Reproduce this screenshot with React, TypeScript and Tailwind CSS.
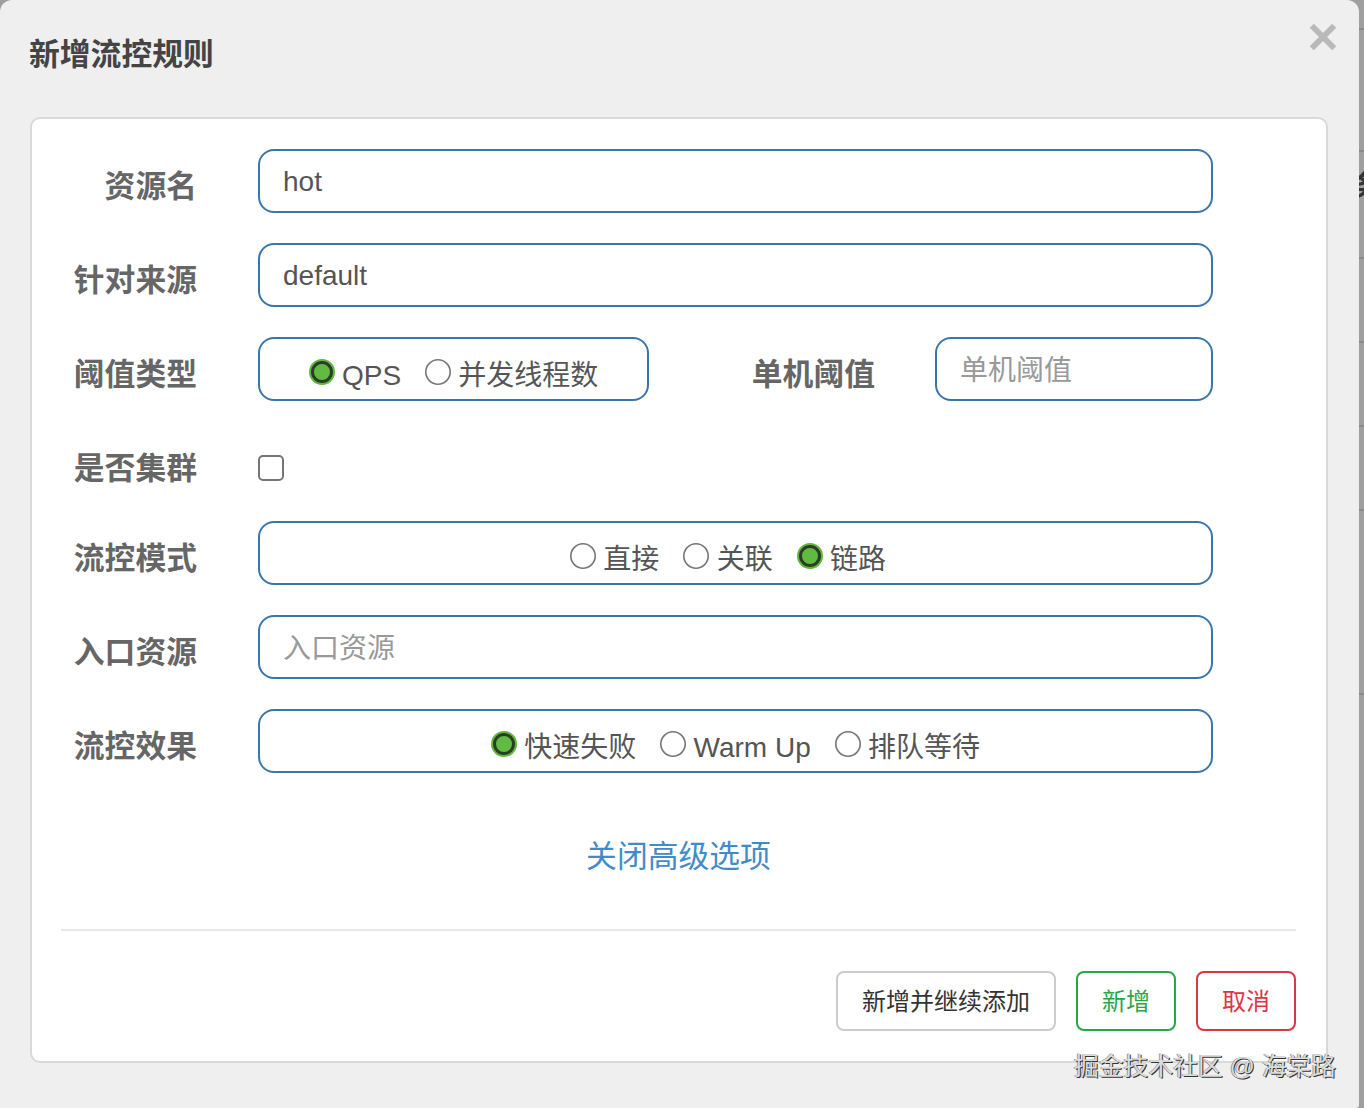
import React, { ReactElement, ReactNode, useState } from 'react';

const thresholdOptions = ['QPS', '并发线程数'];
const modeOptions = ['直接', '关联', '链路'];
const effectOptions = ['快速失败', 'Warm Up', '排队等待'];

const fieldClass =
  'h-16 rounded-[16px] border-2 border-[#3b76ab] bg-white text-[28px] text-[#555] outline-none';

type RowProps = {
  label: string;
  children: ReactNode;
};

function Row({ label, children }: RowProps): ReactElement {
  return (
    <div className="flex h-16">
      <Label className="w-[137px] pr-px">{label}</Label>
      <div className="ml-[60px] flex w-[955px] items-start">{children}</div>
    </div>
  );
}

function Label({ className, children }: { className: string; children: ReactNode }) {
  return (
    <div
      className={`pt-4 text-right text-[30.8px] leading-[44px] font-bold whitespace-nowrap text-[#666] ${className}`}
    >
      {children}
    </div>
  );
}

type RadioGroupProps = {
  className: string;
  options: string[];
  value: string;
  onChange: (value: string) => void;
};

function RadioGroup({ className, options, value, onChange }: RadioGroupProps): ReactElement {
  return (
    <div className={`flex items-start justify-center gap-6 ${fieldClass} ${className}`}>
      {options.map(option => (
        <button
          key={option}
          type="button"
          onClick={() => onChange(option)}
          className="flex items-start gap-[7.3px]"
        >
          <svg width="26" height="26" viewBox="0 0 26 26" className="mt-5 shrink-0">
            {option === value ? (
              <>
                <circle cx="13" cy="13" r="13" fill="#5fb83f" />
                <circle cx="13" cy="13" r="9.5" fill="#62bb41" stroke="#2c3d27" strokeWidth="3" />
              </>
            ) : (
              <circle cx="13" cy="13" r="12.2" fill="#fff" stroke="#767676" strokeWidth="1.6" />
            )}
          </svg>
          <span className="mt-[17px] leading-10 whitespace-nowrap">{option}</span>
        </button>
      ))}
    </div>
  );
}

export default function App(): ReactElement {
  const [threshold, setThreshold] = useState('QPS');
  const [mode, setMode] = useState('链路');
  const [effect, setEffect] = useState('快速失败');

  return (
    <div className="relative flex h-[1108px] w-[1364px] overflow-hidden bg-[#9f9f9f] font-['Liberation_Sans','Noto_Sans_CJK_SC',sans-serif]">
      <div className="z-10 h-full w-[1359px] shrink-0 rounded-t-[12px] rounded-br-[3px] bg-[#efefef] pl-[30px]">
        <div className="flex h-[117px] items-start justify-between pr-[22px]">
          <h4 className="-ml-px pt-[33px] text-[30.8px] leading-[44px] font-bold text-[#444]">
            新增流控规则
          </h4>
          <button type="button" aria-label="Close" className="mt-[23px]">
            <svg width="28" height="28" viewBox="0 0 28 28" stroke="#b9b9b9" strokeWidth="5.8">
              <path d="M2.8 2.8 25.2 25.2M25.2 2.8 2.8 25.2" />
            </svg>
          </button>
        </div>

        <div className="h-[946px] w-[1298px] rounded-[10px] border-2 border-[#d9d9d9] bg-white pt-[30px] pl-[29px]">
          <div className="flex flex-col gap-[30px]">
            <Row label="资源名">
              <input className={`w-full pt-0.5 pl-[23px] ${fieldClass}`} defaultValue="hot" />
            </Row>
            <Row label="针对来源">
              <input className={`w-full pt-0.5 pl-[23px] ${fieldClass}`} defaultValue="default" />
            </Row>
            <Row label="阈值类型">
              <RadioGroup
                className="w-[391px]"
                options={thresholdOptions}
                value={threshold}
                onChange={setThreshold}
              />
              <Label className="w-[226px]">单机阈值</Label>
              <input
                className={`ml-[60px] w-[278px] pt-[3px] pl-[23px] placeholder:text-[#999] ${fieldClass}`}
                placeholder="单机阈值"
              />
            </Row>
            <div className="-mb-1">
              <Row label="是否集群">
                <input
                  type="checkbox"
                  className="mt-6 h-[26px] w-[26px] appearance-none rounded-[5px] border-2 border-[#767676] bg-white"
                />
              </Row>
            </div>
            <Row label="流控模式">
              <RadioGroup
                className="w-full pr-[15px]"
                options={modeOptions}
                value={mode}
                onChange={setMode}
              />
            </Row>
            <Row label="入口资源">
              <input
                className={`w-full pt-[3px] pl-[23px] placeholder:text-[#999] ${fieldClass}`}
                placeholder="入口资源"
              />
            </Row>
            <Row label="流控效果">
              <RadioGroup
                className="w-full"
                options={effectOptions}
                value={effect}
                onChange={setEffect}
              />
            </Row>
          </div>

          <div className="mr-[30px] border-b-2 border-[#e7e7e7] pt-[62px] pb-[50px] text-center text-[30.8px] leading-[44px] text-[#428bca]">
            <a href="#">关闭高级选项</a>
          </div>

          <div className="mt-10 mr-[30px] flex justify-end gap-5 text-[24px]">
            <button type="button" className="h-[60px] w-[220px] rounded-[8px] border-2 border-[#ccc] pt-0.5 text-[#333]">
              新增并继续添加
            </button>
            <button type="button" className="h-[60px] w-[100px] rounded-[8px] border-2 border-[#28a745] pt-0.5 text-[#28a745]">
              新增
            </button>
            <button type="button" className="h-[60px] w-[100px] rounded-[8px] border-2 border-[#dc3545] pt-0.5 text-[#dc3545]">
              取消
            </button>
          </div>
        </div>
      </div>

      {/* strip of the dimmed page behind the dialog */}
      <div className="flex w-[5px] shrink-0 flex-col">
        <div className="h-[30px] shrink-0 border-b-2 border-[#8a8a8a]" />
        <div className="h-[122px] shrink-0 border-b-2 border-[#8a8a8a]" />
        <div className="h-[107px] shrink-0 border-b-2 border-[#8a8a8a] pt-[15px] text-[28px] leading-10 font-bold text-[#333]">
          <span className="-ml-[6px]">务</span>
        </div>
        <div className="h-[84px] shrink-0 border-b-2 border-[#8a8a8a]" />
        <div className="h-[84px] shrink-0 border-b-2 border-[#8a8a8a]" />
        <div className="h-[84px] shrink-0 border-b-2 border-[#8a8a8a]" />
        <div className="h-[184px] shrink-0 border-b-2 border-[#8a8a8a]" />
      </div>

      <div className="absolute top-[1049px] left-[1074px] z-20 text-[24.8px] leading-9 whitespace-nowrap text-[#dcdcdc] [text-shadow:1px_1px_0_#333,-1px_0_0_#999]">
        掘金技术社区 @ 海棠路
      </div>
    </div>
  );
}
